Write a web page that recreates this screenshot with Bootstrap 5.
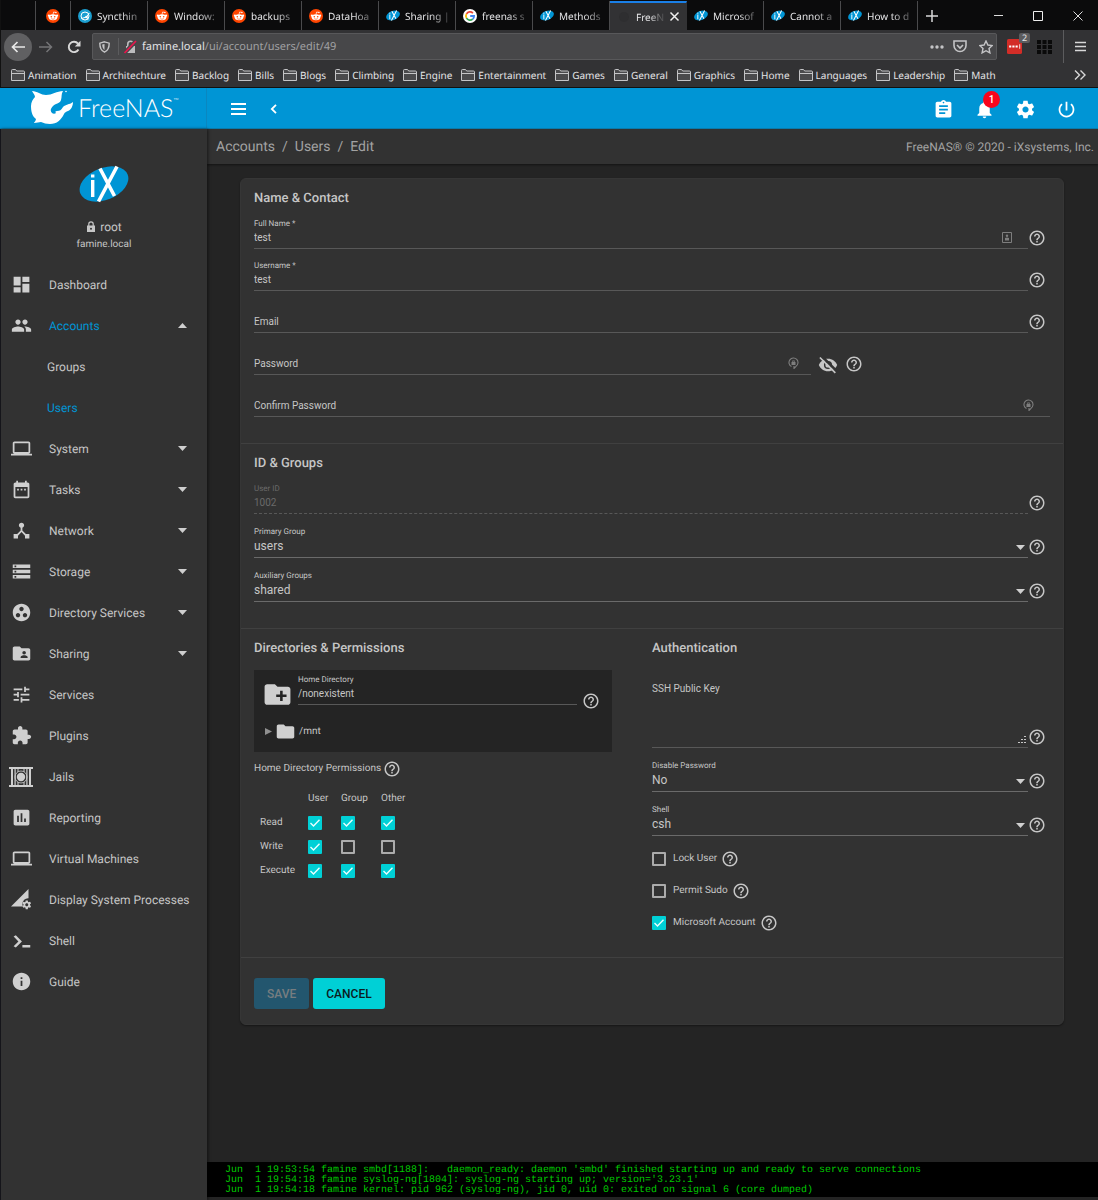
<!DOCTYPE html>
<html lang="en">
<head>
<meta charset="utf-8">
<meta name="viewport" content="width=device-width, initial-scale=1">
<title>FreeNAS - Edit User</title>
<link href="https://cdn.jsdelivr.net/npm/bootstrap@5.3.0/dist/css/bootstrap.min.css" rel="stylesheet">
<style>
:root{--panel:#323232;--ink:#c6c6c6;--blue:#0095d5;--cyan:#00d0d6}
body{font-family:Roboto,"Liberation Sans",sans-serif;font-size:12px;line-height:16px;background:#242424;color:var(--ink);text-rendering:geometricPrecision}
svg{display:block;flex:none}
svg:not([fill]){fill:currentColor}
a{color:inherit;text-decoration:none}
button{background:none;border:0;padding:0;color:inherit}
.chrome{font-family:"Noto Sans","Open Sans",sans-serif;font-size:10px;background:#323234;color:#e4e4e6;border-left:1px solid #111}
.tabstrip{background:#0b0b0c;height:30px;padding-top:1px}
.pinned,.btab{border-right:1px solid #4a4a4c}
.pinned{width:35px;display:flex;align-items:center;justify-content:center}
.btab{width:77px;padding-left:7px;gap:5px;color:#e4e4e6}
.btab .caption{flex:1;white-space:nowrap;-webkit-mask-image:linear-gradient(90deg,#000 50%,#0003 90%);mask-image:linear-gradient(90deg,#000 50%,#0003 90%)}
.btab.current{background:#323234;border-top:2px solid #1a80e8;border-right-color:#323234}
.btab.current svg.shut{margin-right:10px}
.winctl{width:40px;display:flex;align-items:center;justify-content:center}
.toolrow{height:33px;padding:0 12px 0 3px}
.navbtn{width:28px;height:28px;border-radius:50%;display:flex;align-items:center;justify-content:center}
.backbtn{background:#606062}
.urlbox{height:27px;background:#474749;border:1px solid #58585a;border-radius:2px;margin:0 10px 0 4px;padding:0 3px 0 6px;font-size:11px}
.urlbox .path{color:#a0a0a2}
.vline{width:1px;background:#5c5c5e}
.tooltail{gap:11px}
.bookrow{height:25px;padding:0 12px 0 10px;gap:9px;border-bottom:1px solid #111;white-space:nowrap}
.bookrow a{display:flex;align-items:center;gap:3px}
.extbadge{position:absolute;left:8px;top:-6px;background:#5c5c5e;font-size:9px;line-height:10px;padding:0 3px;border-radius:2px}
.topbar{background:var(--blue);height:41px;color:#fff;border-bottom:1px solid #0a7fb3}
.brand{width:207px;padding-left:31px;gap:4px;border-right:1px solid #0a87c0}
.brandname{font-family:Lato,sans-serif;font-weight:300;font-size:25px;line-height:30px}
.brandname sup{font-size:7px;top:-14px}
.topicons{gap:20px;padding-right:21px}
.topbar>button,.topicons{margin-top:2px}
.alertcount{position:absolute;left:9px;top:-8px;width:17px;height:17px;border-radius:50%;background:#f8041c;font-size:10px;font-weight:500;line-height:17px;text-align:center}
.sidebar{width:207px;background:var(--panel);border-left:1px solid #15151a;box-shadow:1px 0 3px #0008;z-index:1}
.profile{height:135px;padding-top:36px}
.profile .host{font-size:10px;margin-top:2px}
.menuitem{display:flex;align-items:center;height:41px;padding:0 20px 0 8px;gap:16px;white-space:nowrap}
.menuitem .glyph{width:24px;flex:none;display:flex;justify-content:center}
.menuitem.sub{padding-left:46px}
.menuitem.on{color:var(--blue)}
.menuitem .glyph{color:#cfcfcf}
.menuitem .arrow{margin-left:auto;color:#cfcfcf}
.crumbs{background:var(--panel);height:35px;padding:0 4px 0 9px;color:#a2a2a2;box-shadow:0 1px 2px #0007}
.crumbs ol{font-size:14px;--bs-breadcrumb-divider-color:#a2a2a2;--bs-breadcrumb-item-padding-x:7px}
.crumbs .breadcrumb-item.active{color:#a2a2a2}
.sheet{background:var(--panel);border:1px solid #363636;border-radius:6px;margin:14px 34px 0 33px;box-shadow:0 1px 2px #0006}
.block{padding:12px 13px 26px}
.block+.block{border-top:1px solid #404040}
.block h2{font-size:13px;line-height:16px;font-weight:500;margin:0}
.line{display:flex;align-items:flex-end;height:42px}
.line.tall{height:44px}
.fld{flex:1;position:relative;display:flex;flex-direction:column}
.fld label{font-size:8px;line-height:10px}
.fld input,.fld textarea{font-size:10px;line-height:16px;height:20px;padding:0 0 3px;border:0;border-bottom:1px solid #585858;background:none;color:inherit;width:100%;border-radius:0}
.fld textarea{height:75px;padding-top:8px;resize:none;display:block}
.fld ::placeholder{color:inherit;opacity:1}
.fld select{font-size:12px;line-height:18px;height:21px;padding:0 0 2px;border:0;border-bottom:1px solid #6a6a6a;border-radius:0;background-color:transparent;color:inherit;background-image:url("data:image/svg+xml,%3Csvg xmlns='http://www.w3.org/2000/svg' viewBox='0 0 9 5'%3E%3Cpath fill='%23cfcfcf' d='M0 0h9L4.500 5z'/%3E%3C/svg%3E");background-size:9px 5px;background-position:right 3px center}
.fld.off{color:#6a6a6a}
.fld.off input{border-bottom:1px dashed #585858}
.fld.part{flex:0 0 70%}
.inmark{position:absolute;right:16px;bottom:6px;color:#7e7e7e}
.fld.part .inmark{right:12px}
.grip{position:absolute;right:2px;bottom:4px}
.help{width:22px;margin-bottom:2px}
.aside-btn{margin-left:7px}
.dirbox{background:#242424;height:82px;width:90%;margin-top:13px;padding:5px 12px 0 8px}
.dirline{height:35px;gap:5px}
.treerow{font-size:10px;gap:3px;padding:11px 0 0 3px}
.permhead{font-size:10px;gap:2px}
.form-check-input[type=checkbox]{width:14px;height:14px;margin:0;float:none;border:2px solid #ababab;border-radius:1px;background-color:transparent;flex:none;display:block}
.form-check-input[type=checkbox]:checked{background-color:var(--cyan);border-color:var(--cyan);background-size:14px;background-image:url("data:image/svg+xml,%3Csvg xmlns='http://www.w3.org/2000/svg' viewBox='0 0 14 14'%3E%3Cpath fill='none' stroke='%23eaffff' stroke-width='1.4' d='M2.500 7l3 3 6-6.200'/%3E%3C/svg%3E");background-position:center}
.perms{font-size:10px;margin-left:6px}
.perms th{font-weight:400;height:24px;padding:1px 0 0}
.perms td{padding:2px 0 0}
.perms th:first-child{width:48px}
.perms th:nth-child(2){width:33px}
.perms th:nth-child(3){width:40px}
.cklist{padding-top:7px}
.ckrow{height:32px;gap:4px;font-size:10px}
.ckrow label{padding-left:3px}
.lower{padding-bottom:18px}
.actions{padding-top:20px;padding-bottom:15px}
.act{font-size:12px;font-weight:500;height:31px;padding:0 13px;border:0;border-radius:3px;background:var(--cyan);color:#0c1c1e}
.act:disabled{background:#23566e;color:#777d80;opacity:1}
.console{background:#000;color:#00c800;font-family:"Liberation Mono",monospace;font-size:10px;line-height:10px;padding:4px 18px 1px;margin:0 0 3px;overflow:hidden}
</style>
</head>
<body class="d-flex flex-column min-vh-100">
<svg width="0" height="0" class="position-absolute" aria-hidden="true">
<symbol id="help" viewBox="0 0 24 24"><path d="M11 18h2v-2h-2v2zm1-16C6.480 2 2 6.480 2 12s4.480 10 10 10 10-4.480 10-10S17.520 2 12 2zm0 18c-4.410 0-8-3.590-8-8s3.590-8 8-8 8 3.590 8 8-3.590 8-8 8zm0-14c-2.210 0-4 1.790-4 4h2c0-1.100.9-2 2-2s2 .9 2 2c0 2-3 1.750-3 5h2c0-2.250 3-2.500 3-5 0-2.210-1.790-4-4-4z"/></symbol>
<symbol id="reddit" viewBox="0 0 14 14"><circle cx="7" cy="7" r="7" fill="#ff4500"/><ellipse cx="7" cy="8.300" rx="4.300" ry="3" fill="#fff"/><circle cx="2.900" cy="6.700" r="1.100" fill="#fff"/><circle cx="11.100" cy="6.700" r="1.100" fill="#fff"/><path d="M7 5.500l.6-2.500 2 .4" fill="none" stroke="#fff" stroke-width=".7"/><circle cx="9.900" cy="3.500" r=".8" fill="#fff"/><circle cx="5.300" cy="7.800" r=".8" fill="#ff4500"/><circle cx="8.700" cy="7.800" r=".8" fill="#ff4500"/><path d="M5.200 9.700q1.800 1.100 3.600 0" fill="none" stroke="#ff4500" stroke-width=".6"/></symbol>
<symbol id="ix" viewBox="0 0 50 38"><ellipse cx="25" cy="19" rx="25.500" ry="16" transform="rotate(-22 25 19)" fill="#0095d5"/><path d="M12 15h3.400v17H12zM12 9.500h3.400v3H12z" fill="#fff"/><path d="M21 3.500L35.500 31M38 1.500L19.500 36.500" stroke="#fff" stroke-width="3.600" fill="none"/></symbol>
<symbol id="folder-o" viewBox="0 0 14 12"><path d="M.5 11.500V1.500q0-1 1-1h3l1.200 1.500h6.800q1 0 1 1v8.500zM.5 4.500h13" fill="#4a4a4c" stroke="#c4c4c6"/></symbol>
<symbol id="down" viewBox="0 0 9 5"><path d="M0 0h9L4.500 5z"/></symbol>
<symbol id="laptop" viewBox="0 0 24 24"><path d="M20 18c1.100 0 1.990-.9 1.990-2L22 6c0-1.100-.9-2-2-2H4c-1.100 0-2 .9-2 2v10c0 1.100.9 2 2 2H0v2h24v-2h-4zM4 6h16v10H4V6z"/></symbol>
<symbol id="gear" viewBox="0 0 24 24"><path d="M19.430 12.980c.04-.32.07-.64.07-.98s-.03-.66-.07-.98l2.110-1.650c.19-.15.24-.42.12-.64l-2-3.460c-.12-.22-.39-.3-.61-.22l-2.490 1c-.52-.4-1.080-.73-1.690-.98l-.38-2.650C14.460 2.180 14.250 2 14 2h-4c-.25 0-.46.18-.49.42l-.38 2.650c-.61.25-1.170.59-1.690.98l-2.490-1c-.23-.09-.49 0-.61.22l-2 3.460c-.13.22-.07.49.12.64l2.110 1.650c-.04.32-.07.65-.07.98s.03.66.07.98l-2.110 1.650c-.19.15-.24.42-.12.64l2 3.460c.12.22.39.3.61.22l2.490-1c.52.4 1.080.73 1.690.98l.38 2.650c.03.24.24.42.49.42h4c.25 0 .46-.18.49-.42l.38-2.650c.61-.25 1.170-.59 1.690-.98l2.490 1c.23.09.49 0 .61-.22l2-3.460c.12-.22.07-.49-.12-.64l-2.110-1.650zM12 15.500c-1.930 0-3.500-1.570-3.500-3.500s1.570-3.500 3.500-3.500 3.500 1.570 3.500 3.500-1.570 3.500-3.500 3.500z"/></symbol>
<symbol id="keymark" viewBox="0 0 11 12"><path d="M3.500 9.600A4.500 4.500 0 1 1 8 9.300L6 11.500V9" fill="none" stroke="currentColor" stroke-width="1.100"/><path d="M3.500 5h4v3h-4zM4.300 5V3.500h2.400V5h-.8v-.8h-.8V5z"/></symbol>
</svg>

<header class="chrome">
<div class="tabstrip d-flex">
<div class="pinned"></div>
<a href="#" class="pinned" aria-label="reddit"><svg width="14" height="14"><use href="#reddit"/></svg></a>
<a href="#" class="btab d-flex align-items-center"><svg width="14" height="14" viewBox="0 0 14 14"><circle cx="7" cy="7" r="7" fill="#1c9fd0"/><circle cx="7" cy="7" r="4" fill="none" stroke="#fff"/><path d="M3.500 9.500L8.500 8l2.800-4M8.500 8l1.500 2.500" stroke="#fff" fill="none"/><circle cx="8.500" cy="8" r="1.300" fill="#fff"/></svg><span class="caption">Syncthin</span></a>
<a href="#" class="btab d-flex align-items-center"><svg width="14" height="14"><use href="#reddit"/></svg><span class="caption">Window:</span></a>
<a href="#" class="btab d-flex align-items-center"><svg width="14" height="14"><use href="#reddit"/></svg><span class="caption">backups</span></a>
<a href="#" class="btab d-flex align-items-center"><svg width="14" height="14"><use href="#reddit"/></svg><span class="caption">DataHoa</span></a>
<a href="#" class="btab d-flex align-items-center"><svg width="14" height="11"><use href="#ix"/></svg><span class="caption">Sharing |</span></a>
<a href="#" class="btab d-flex align-items-center"><svg width="14" height="14" viewBox="0 0 14 14"><circle cx="7" cy="7" r="7" fill="#fff"/><g fill="none" stroke-width="1.800"><path d="M9.900 4.100A4.100 4.100 0 0 0 3.500 4.900" stroke="#ea4335"/><path d="M3.500 4.900a4.100 4.100 0 0 0 0 4.200" stroke="#fbbc05"/><path d="M3.500 9.100a4.100 4.100 0 0 0 6.200 1" stroke="#34a853"/><path d="M9.700 10.100A4 4 0 0 0 11.100 7H7.200" stroke="#4285f4"/></g></svg><span class="caption">freenas s</span></a>
<a href="#" class="btab d-flex align-items-center"><svg width="14" height="11"><use href="#ix"/></svg><span class="caption">Methods</span></a>
<a href="#" class="btab current d-flex align-items-center" aria-current="page"><svg width="14" height="14" viewBox="0 0 14 14"><circle cx="7" cy="7" r="5" fill="#2e2e30"/></svg><span class="caption">FreeN</span><svg class="shut" width="11" height="11" viewBox="0 0 11 11"><path d="M1.500 1.500l8 8M9.500 1.500l-8 8" stroke="#f0f0f0" stroke-width="1.500"/></svg></a>
<a href="#" class="btab d-flex align-items-center"><svg width="14" height="11"><use href="#ix"/></svg><span class="caption">Microsof</span></a>
<a href="#" class="btab d-flex align-items-center"><svg width="14" height="11"><use href="#ix"/></svg><span class="caption">Cannot a</span></a>
<a href="#" class="btab d-flex align-items-center"><svg width="14" height="11"><use href="#ix"/></svg><span class="caption">How to d</span></a>
<button type="button" class="px-2" aria-label="New tab"><svg width="12" height="12" viewBox="0 0 12 12"><path d="M6 0v12M0 6h12" stroke="#d8d8d8" stroke-width="1.500"/></svg></button>
<div class="d-flex ms-auto">
<button type="button" class="winctl" aria-label="Minimize"><svg width="9" height="9" viewBox="0 0 9 9"><path d="M0 4.500h9" stroke="#ddd"/></svg></button>
<button type="button" class="winctl" aria-label="Maximize"><svg width="10" height="10" viewBox="0 0 10 10"><path d="M.5.5h9v9h-9z" stroke="#eee" fill="none"/></svg></button>
<button type="button" class="winctl" aria-label="Close"><svg width="10" height="10" viewBox="0 0 10 10"><path d="M.5.5l9 9M9.500.5l-9 9" stroke="#ddd"/></svg></button>
</div>
</div>
<div class="toolrow d-flex align-items-center">
<button type="button" class="navbtn backbtn" aria-label="Back"><svg width="14" height="12" viewBox="0 0 14 12"><path d="M14 6H1.500M6.500 1l-5 5 5 5" fill="none" stroke="#e8e8e8" stroke-width="1.700"/></svg></button>
<button type="button" class="navbtn" aria-label="Forward"><svg width="14" height="12" viewBox="0 0 14 12"><path d="M0 6h12.500M7.500 1l5 5-5 5" fill="none" stroke="#747476" stroke-width="1.500"/></svg></button>
<button type="button" class="navbtn" aria-label="Reload"><svg width="14" height="14" viewBox="0 0 14 14"><path d="M11.500 9.500A5.200 5.200 0 1 1 11 3.600" fill="none" stroke="#d8d8d8" stroke-width="1.900"/><path d="M13.500.8v5.700H7.800z" fill="#d8d8d8"/></svg></button>
<div class="urlbox d-flex align-items-center flex-fill">
<svg width="11" height="12" viewBox="0 0 11 12"><path d="M5.500.8l4.700 1.400c0 4.500-1 7.300-4.700 9C1.800 9.500.8 6.700.8 2.200z" fill="none" stroke="#c4c4c6" stroke-width="1.400"/><path d="M5.500 3v6C4 8 3.200 6 3.200 3.600z" fill="#c4c4c6"/></svg>
<span class="vline ms-2 me-1 my-1 align-self-stretch"></span>
<svg class="me-1" width="15" height="14" viewBox="0 0 15 14"><path d="M3 6h9v7H3z" fill="#bcbcbe"/><path d="M4.800 6V4a2.700 2.700 0 0 1 5.400 0v2" fill="none" stroke="#bcbcbe" stroke-width="1.600"/><path d="M1.500 13L13 1" stroke="#474749" stroke-width="4"/><path d="M1.500 13L13 1" stroke="#e8164c" stroke-width="1.800"/></svg>
<span>famine.local<span class="path">/ui/account/users/edit/49</span></span>
<div class="d-flex align-items-center gap-2 ms-auto">
<svg width="17" height="14" viewBox="0 0 17 14" fill="#c4c4c6"><circle cx="4" cy="7" r="1.700"/><circle cx="9" cy="7" r="1.700"/><circle cx="14" cy="7" r="1.700"/></svg>
<svg width="14" height="13" viewBox="0 0 14 13"><path d="M1 1h12v4.500a6 6 0 0 1-12 0zM4 5l3 3 3-3" fill="none" stroke="#c4c4c6" stroke-width="1.600"/></svg>
<svg class="ms-1" width="14" height="14" viewBox="0 0 14 14"><path d="M7 1l1.900 4 4.300.5-3.200 3 .9 4.400L7 10.700l-3.900 2.200.9-4.400-3.200-3L5.100 5z" fill="none" stroke="#c4c4c6" stroke-width="1.400"/></svg>
</div>
</div>
<div class="tooltail d-flex align-items-center align-self-stretch">
<div class="position-relative me-1"><svg width="15" height="15" viewBox="0 0 14 14"><rect width="14" height="14" rx="1.500" fill="#d32d27"/><path d="M2 6h2v2H2zM5 6h2v2H5zM8 6h2v2H8zM11.500 5h.8v4h-.8z" fill="#fff"/></svg><span class="extbadge ms-1">2</span></div>
<svg width="15" height="14" viewBox="0 0 15 14" fill="#0a0a0a"><path d="M0 0h4v4H0zM5.500 0h4v4h-4zM11 0h4v4h-4zM0 5h4v4H0zM5.500 5h4v4h-4zM11 5h4v4h-4zM0 10h4v4H0zM5.500 10h4v4h-4zM11 10h4v4h-4z"/></svg>
<span class="vline align-self-stretch"></span>
<button type="button" aria-label="Menu"><svg width="11" height="11" viewBox="0 0 11 11"><path d="M0 1.500h11M0 5.500h11M0 9.500h11" stroke="#d8d8d8" stroke-width="1.500"/></svg></button>
</div>
</div>
<nav class="bookrow d-flex align-items-center" aria-label="Bookmarks">
<a href="#"><svg width="14" height="12"><use href="#folder-o"/></svg>Animation</a>
<a href="#"><svg width="14" height="12"><use href="#folder-o"/></svg>Architechture</a>
<a href="#"><svg width="14" height="12"><use href="#folder-o"/></svg>Backlog</a>
<a href="#"><svg width="14" height="12"><use href="#folder-o"/></svg>Bills</a>
<a href="#"><svg width="14" height="12"><use href="#folder-o"/></svg>Blogs</a>
<a href="#"><svg width="14" height="12"><use href="#folder-o"/></svg>Climbing</a>
<a href="#"><svg width="14" height="12"><use href="#folder-o"/></svg>Engine</a>
<a href="#"><svg width="14" height="12"><use href="#folder-o"/></svg>Entertainment</a>
<a href="#"><svg width="14" height="12"><use href="#folder-o"/></svg>Games</a>
<a href="#"><svg width="14" height="12"><use href="#folder-o"/></svg>General</a>
<a href="#"><svg width="14" height="12"><use href="#folder-o"/></svg>Graphics</a>
<a href="#"><svg width="14" height="12"><use href="#folder-o"/></svg>Home</a>
<a href="#"><svg width="14" height="12"><use href="#folder-o"/></svg>Languages</a>
<a href="#"><svg width="14" height="12"><use href="#folder-o"/></svg>Leadership</a>
<a href="#"><svg width="14" height="12"><use href="#folder-o"/></svg>Math</a>
<button type="button" class="ms-auto" aria-label="More bookmarks"><svg width="12" height="10" viewBox="0 0 12 10"><path d="M1 .5L5.500 5 1 9.500M6.500.5L11 5 6.500 9.500" fill="none" stroke="#d8d8d8" stroke-width="1.400"/></svg></button>
</nav>
</header>

<div class="topbar d-flex align-items-center">
<a href="#" class="brand d-flex align-items-center align-self-stretch"><svg width="43" height="36" viewBox="0 0 43 36"><path d="M1 1c5 0 9 4 14 4 6 0 11-4 17-4-2 3-1 6-2 9-1 3-3 3-5 4-4 2-7 6-4 9 1 1 3 1 4 0-1-1-1-2 1-2 3 0 4-1 6-4 3-3 6-2 10-5 0 4-2 8-5 9-2 1-3 1-4 3-3 6-7 10-14 10-4 0-6-1-9-2-2 0-4 1-7 1 0-1 2-2 2-4C1 26 0 21 0 16c0-4 2-7 4-9 0-2-2-4-3-6z" fill="#fff"/><circle cx="35" cy="1.500" r=".8" fill="#fff"/></svg><span class="brandname">FreeNAS<sup>™</sup></span></a>
<button type="button" class="ms-4" aria-label="Toggle menu"><svg width="15" height="12" viewBox="0 0 15 12"><path d="M0 1h15M0 6h15M0 11h15" stroke="#fff" stroke-width="1.800"/></svg></button>
<button type="button" class="ms-4" aria-label="Collapse"><svg width="7" height="10" viewBox="0 0 7 10"><path d="M6 .8L1.800 5 6 9.200" fill="none" stroke="#fff" stroke-width="1.800"/></svg></button>
<div class="topicons d-flex ms-auto">
<button type="button" aria-label="Tasks"><svg width="21" height="21" viewBox="0 0 24 24"><path d="M19 3h-4.180C14.400 1.840 13.300 1 12 1c-1.300 0-2.400.84-2.820 2H5c-1.100 0-2 .9-2 2v14c0 1.100.9 2 2 2h14c1.100 0 2-.9 2-2V5c0-1.100-.9-2-2-2zm-7 0c.55 0 1 .45 1 1s-.45 1-1 1-1-.45-1-1 .45-1 1-1zm2 14H7v-2h7v2zm3-4H7v-2h10v2zm0-4H7V7h10v2z"/></svg></button>
<button type="button" class="position-relative" aria-label="Alerts"><svg width="21" height="21" viewBox="0 0 24 24"><path d="M12 22c1.100 0 2-.9 2-2h-4c0 1.100.89 2 2 2zm6-6v-5c0-3.070-1.640-5.640-4.500-6.320V4c0-.83-.67-1.500-1.500-1.500s-1.500.67-1.500 1.500v.68C7.630 5.360 6 7.920 6 11v5l-2 2v1h16v-1l-2-2z"/></svg><span class="alertcount">1</span></button>
<button type="button" aria-label="Settings"><svg width="21" height="21"><use href="#gear"/></svg></button>
<button type="button" aria-label="Power"><svg width="21" height="21" viewBox="0 0 24 24"><path d="M13 3h-2v10h2V3zm4.830 2.170l-1.420 1.420C17.990 7.860 19 9.810 19 12c0 3.870-3.130 7-7 7s-7-3.130-7-7c0-2.190 1.010-4.140 2.580-5.420L6.170 5.170C4.230 6.820 3 9.260 3 12c0 4.970 4.030 9 9 9s9-4.030 9-9c0-2.740-1.230-5.180-3.170-6.830z"/></svg></button>
</div>
</div>

<div class="d-flex flex-fill">
<aside class="sidebar flex-shrink-0">
<div class="profile d-flex flex-column align-items-center">
<svg width="50" height="38"><use href="#ix"/></svg>
<div class="d-flex align-items-center gap-1 mt-3"><svg width="10" height="12" viewBox="0 0 10 12"><path d="M1 4.500h8v6.500H1z"/><path d="M2.800 5V3a2.200 2.200 0 0 1 4.400 0v2" fill="none" stroke="currentColor" stroke-width="1.200"/><circle cx="5" cy="7.700" r="1" fill="#323232"/></svg><span>root</span></div>
<div class="host">famine.local</div>
</div>
<nav aria-label="Main">
<a href="#" class="menuitem"><span class="glyph"><svg width="21" height="21" viewBox="0 0 24 24"><path d="M3 13h8V3H3v10zm0 8h8v-6H3v6zm10 0h8V11h-8v10zm0-18v6h8V3h-8z"/></svg></span><span>Dashboard</span></a>
<a href="#" class="menuitem on"><span class="glyph"><svg width="21" height="21" viewBox="0 0 24 24"><path d="M16 11c1.660 0 2.990-1.340 2.990-3S17.660 5 16 5s-3 1.340-3 3 1.340 3 3 3zm-8 0c1.660 0 2.990-1.340 2.990-3S9.660 5 8 5 5 6.340 5 8s1.340 3 3 3zm0 2c-2.330 0-7 1.170-7 3.500V19h14v-2.500C15 14.170 10.330 13 8 13zm8 0c-.29 0-.62.02-.97.05 1.160.84 1.970 1.970 1.970 3.450V19h6v-2.500c0-2.330-4.670-3.500-7-3.500z"/></svg></span><span>Accounts</span><svg class="arrow" width="9" height="5" viewBox="0 0 9 5"><path d="M0 5h9L4.500 0z"/></svg></a>
<a href="#" class="menuitem sub"><span>Groups</span></a>
<a href="#" class="menuitem sub on"><span>Users</span></a>
<a href="#" class="menuitem"><span class="glyph"><svg width="21" height="21"><use href="#laptop"/></svg></span><span>System</span><svg class="arrow" width="9" height="5"><use href="#down"/></svg></a>
<a href="#" class="menuitem"><span class="glyph"><svg width="21" height="21" viewBox="0 0 24 24"><path d="M9 11H7v2h2v-2zm4 0h-2v2h2v-2zm4 0h-2v2h2v-2zm2-7h-1V2h-2v2H8V2H6v2H5c-1.110 0-1.990.9-1.990 2L3 20c0 1.100.89 2 2 2h14c1.100 0 2-.9 2-2V6c0-1.100-.9-2-2-2zm0 16H5V9h14v11z"/></svg></span><span>Tasks</span><svg class="arrow" width="9" height="5"><use href="#down"/></svg></a>
<a href="#" class="menuitem"><span class="glyph"><svg width="21" height="21" viewBox="0 0 24 24"><path d="M17 16l-4-4V8.820C14.160 8.400 15 7.300 15 6c0-1.660-1.340-3-3-3S9 4.340 9 6c0 1.300.84 2.400 2 2.820V12l-4 4H3v5h5v-3.050l4-4.200 4 4.200V21h5v-5h-4z"/></svg></span><span>Network</span><svg class="arrow" width="9" height="5"><use href="#down"/></svg></a>
<a href="#" class="menuitem"><span class="glyph"><svg width="21" height="21" viewBox="0 0 24 24"><path d="M2 20h20v-4H2v4zm2-3h2v2H4v-2zM2 4v4h20V4H2zm4 3H4V5h2v2zm-4 7h20v-4H2v4zm2-3h2v2H4v-2z"/></svg></span><span>Storage</span><svg class="arrow" width="9" height="5"><use href="#down"/></svg></a>
<a href="#" class="menuitem"><span class="glyph"><svg width="21" height="21" viewBox="0 0 24 24"><path d="M12 2C6.480 2 2 6.480 2 12s4.480 10 10 10 10-4.480 10-10S17.520 2 12 2zM8 17.500c-1.380 0-2.500-1.120-2.500-2.500s1.120-2.500 2.500-2.500 2.500 1.120 2.500 2.500-1.120 2.500-2.500 2.500zM9.500 8c0-1.380 1.120-2.500 2.500-2.500s2.500 1.120 2.500 2.500-1.120 2.500-2.500 2.500S9.500 9.380 9.500 8zm6.500 9.500c-1.380 0-2.500-1.120-2.500-2.500s1.120-2.500 2.500-2.500 2.500 1.120 2.500 2.500-1.120 2.500-2.500 2.500z"/></svg></span><span>Directory Services</span><svg class="arrow" width="9" height="5"><use href="#down"/></svg></a>
<a href="#" class="menuitem"><span class="glyph"><svg width="21" height="21" viewBox="0 0 24 24"><path d="M20 6h-8l-2-2H4c-1.100 0-1.990.9-1.990 2L2 18c0 1.100.9 2 2 2h16c1.100 0 2-.9 2-2V8c0-1.100-.9-2-2-2zm-5 3c1.100 0 2 .9 2 2s-.9 2-2 2-2-.9-2-2 .9-2 2-2zm4 8h-8v-1c0-1.330 2.670-2 4-2s4 .67 4 2v1z"/></svg></span><span>Sharing</span><svg class="arrow" width="9" height="5"><use href="#down"/></svg></a>
<a href="#" class="menuitem"><span class="glyph"><svg width="21" height="21" viewBox="0 0 24 24"><path d="M3 17v2h6v-2H3zM3 5v2h10V5H3zm10 16v-2h8v-2h-8v-2h-2v6h2zM7 9v2H3v2h4v2h2V9H7zm14 4v-2H11v2h10zm-6-4h2V7h4V5h-4V3h-2v6z"/></svg></span><span>Services</span></a>
<a href="#" class="menuitem"><span class="glyph"><svg width="21" height="21" viewBox="0 0 24 24"><path d="M20.500 11H19V7c0-1.100-.9-2-2-2h-4V3.500C13 2.120 11.880 1 10.500 1S8 2.120 8 3.500V5H4c-1.100 0-1.990.9-1.990 2v3.800H3.500c1.490 0 2.700 1.210 2.700 2.700s-1.210 2.700-2.700 2.700H2V20c0 1.100.9 2 2 2h3.800v-1.500c0-1.490 1.210-2.700 2.700-2.700 1.490 0 2.700 1.210 2.700 2.700V22H17c1.100 0 2-.9 2-2v-4h1.500c1.380 0 2.500-1.120 2.500-2.500S21.880 11 20.500 11z"/></svg></span><span>Plugins</span></a>
<a href="#" class="menuitem"><span class="glyph"><svg width="24" height="20" viewBox="0 0 24 20"><path d="M0 0h24v2H0zM0 18h24v2H0zM2 2h2v16H2zM5.500 2h1.200v16H5.500zM17.300 2h1.200v16h-1.200zM20 2h2v16h-2zM8.500 2h1v3h-1zM14.500 2h1v3h-1zM8.500 15h1v3h-1zM14.500 15h1v3h-1z"/><circle cx="12" cy="10" r="4.200"/><circle cx="12" cy="10" r="6" fill="none" stroke="currentColor" stroke-width=".8"/></svg></span><span>Jails</span></a>
<a href="#" class="menuitem"><span class="glyph"><svg width="21" height="21" viewBox="0 0 24 24"><path d="M19 3H5c-1.100 0-2 .9-2 2v14c0 1.100.9 2 2 2h14c1.100 0 2-.9 2-2V5c0-1.100-.9-2-2-2zM9 17H7v-7h2v7zm4 0h-2V7h2v10zm4 0h-2v-4h2v4z"/></svg></span><span>Reporting</span></a>
<a href="#" class="menuitem"><span class="glyph"><svg width="21" height="21"><use href="#laptop"/></svg></span><span>Virtual Machines</span></a>
<a href="#" class="menuitem"><span class="glyph"><svg width="21" height="21" viewBox="0 0 24 24"><path d="M0 20L20 0v10.500a6.500 6.500 0 0 0-7 6.500q0 1.600.6 3z"/><svg x="12" y="12" width="12" height="12"><use href="#gear"/></svg></svg></span><span>Display System Processes</span></a>
<a href="#" class="menuitem"><span class="glyph"><svg width="21" height="21" viewBox="0 0 24 24"><path d="M3 7.500L5.500 6l7 7-7 7L3 18.500 8.500 13zM13 17h9v3h-9z"/></svg></span><span>Shell</span></a>
<a href="#" class="menuitem"><span class="glyph"><svg width="21" height="21" viewBox="0 0 24 24"><path d="M12 2C6.480 2 2 6.480 2 12s4.480 10 10 10 10-4.480 10-10S17.520 2 12 2zm1 15h-2v-6h2v6zm0-8h-2V7h2v2z"/></svg></span><span>Guide</span></a>
</nav>
</aside>

<div class="d-flex flex-column flex-fill">
<div class="crumbs d-flex align-items-center justify-content-between">
<nav aria-label="breadcrumb"><ol class="breadcrumb mb-0"><li class="breadcrumb-item"><a href="#">Accounts</a></li><li class="breadcrumb-item"><a href="#">Users</a></li><li class="breadcrumb-item active" aria-current="page">Edit</li></ol></nav>
<span>FreeNAS® © 2020 - iXsystems, Inc.</span>
</div>

<main>
<form class="sheet">
<section class="block">
<h2>Name &amp; Contact</h2>
<div class="line"><div class="fld"><label for="fn">Full Name *</label><input id="fn" value="test"><svg class="inmark" width="10" height="11" viewBox="0 0 10 11"><path d="M.5.5h9v10h-9z" fill="none" stroke="currentColor"/><circle cx="5" cy="3.800" r="1.200"/><path d="M3 8.500V6q2-1 4 0v2.500z"/></svg></div><button type="button" class="help" aria-label="Help"><svg width="18" height="18"><use href="#help"/></svg></button></div>
<div class="line"><div class="fld"><label for="un">Username *</label><input id="un" value="test"></div><button type="button" class="help" aria-label="Help"><svg width="18" height="18"><use href="#help"/></svg></button></div>
<div class="line"><div class="fld"><input aria-label="Email" placeholder="Email"></div><button type="button" class="help" aria-label="Help"><svg width="18" height="18"><use href="#help"/></svg></button></div>
<div class="line"><div class="fld part"><input aria-label="Password" type="password" placeholder="Password"><svg class="inmark" width="11" height="12"><use href="#keymark"/></svg></div><button type="button" class="aside-btn" aria-label="Show password"><svg width="20" height="20" viewBox="0 0 24 24"><path d="M12 4.500C7 4.500 2.700 7.600 1 12c1.700 4.400 6 7.500 11 7.500s9.300-3.100 11-7.500C21.300 7.600 17 4.500 12 4.500z"/><circle cx="12" cy="12" r="4" fill="none" stroke="#323232" stroke-width="1.800"/><path d="M4.500 1.500l18 18" stroke="#323232" stroke-width="3"/><path d="M2.300 3l18.500 18.500" stroke="currentColor" stroke-width="2"/></svg></button><button type="button" class="help aside-btn" aria-label="Help"><svg width="18" height="18"><use href="#help"/></svg></button></div>
<div class="line"><div class="fld"><input aria-label="Confirm Password" type="password" placeholder="Confirm Password"><svg class="inmark" width="11" height="12"><use href="#keymark"/></svg></div></div>
</section>

<section class="block">
<h2>ID &amp; Groups</h2>
<div class="line"><div class="fld off"><label for="uid">User ID</label><input id="uid" value="1002" disabled></div><button type="button" class="help" aria-label="Help"><svg width="18" height="18"><use href="#help"/></svg></button></div>
<div class="line tall"><div class="fld"><label for="pg">Primary Group</label><select id="pg" class="form-select"><option>users</option></select></div><button type="button" class="help" aria-label="Help"><svg width="18" height="18"><use href="#help"/></svg></button></div>
<div class="line tall"><div class="fld"><label for="ag">Auxiliary Groups</label><select id="ag" class="form-select"><option>shared</option></select></div><button type="button" class="help" aria-label="Help"><svg width="18" height="18"><use href="#help"/></svg></button></div>
</section>

<section class="block lower">
<div class="row g-0">
<div class="col-6">
<h2>Directories &amp; Permissions</h2>
<div class="dirbox">
<div class="dirline d-flex align-items-end">
<svg width="31" height="31" viewBox="0 0 24 24" fill="#cfcfcf"><path d="M20 6h-8l-2-2H4c-1.110 0-1.990.89-1.990 2L2 18c0 1.110.89 2 2 2h16c1.110 0 2-.89 2-2V8c0-1.110-.89-2-2-2zm-1 8h-3v3h-2v-3h-3v-2h3V9h2v3h3v2z"/></svg>
<div class="fld align-self-start"><label for="hd">Home Directory</label><input id="hd" value="/nonexistent"></div>
<button type="button" aria-label="Help"><svg width="18" height="18"><use href="#help"/></svg></button>
</div>
<div class="treerow d-flex align-items-center"><svg width="7" height="7" viewBox="0 0 7 7" fill="#909090"><path d="M0 0l7 3.500L0 7z"/></svg><svg width="21" height="21" viewBox="0 0 24 24" fill="#cfcfcf"><path d="M10 4H4c-1.100 0-1.990.9-1.990 2L2 18c0 1.100.9 2 2 2h16c1.100 0 2-.9 2-2V8c0-1.100-.9-2-2-2h-8l-2-2z"/></svg><span>/mnt</span></div>
</div>
<div class="permhead d-flex align-items-center mt-2">Home Directory Permissions<svg width="18" height="18"><use href="#help"/></svg></div>
<table class="perms mt-2">
<thead><tr><th></th><th scope="col">User</th><th scope="col">Group</th><th scope="col">Other</th></tr></thead>
<tbody>
<tr><th scope="row">Read</th><td><input class="form-check-input" type="checkbox" aria-label="User read" checked></td><td><input class="form-check-input" type="checkbox" aria-label="Group read" checked></td><td><input class="form-check-input" type="checkbox" aria-label="Other read" checked></td></tr>
<tr><th scope="row">Write</th><td><input class="form-check-input" type="checkbox" aria-label="User write" checked></td><td><input class="form-check-input" type="checkbox" aria-label="Group write"></td><td><input class="form-check-input" type="checkbox" aria-label="Other write"></td></tr>
<tr><th scope="row">Execute</th><td><input class="form-check-input" type="checkbox" aria-label="User execute" checked></td><td><input class="form-check-input" type="checkbox" aria-label="Group execute" checked></td><td><input class="form-check-input" type="checkbox" aria-label="Other execute" checked></td></tr>
</tbody></table>
</div>
<div class="col-6">
<h2>Authentication</h2>
<div class="line h-auto pt-3"><div class="fld"><textarea aria-label="SSH Public Key" placeholder="SSH Public Key"></textarea><svg class="grip" width="8" height="8" viewBox="0 0 8 8"><path d="M6 0h2v1H6zM6 3h2v1H6zM3 3h2v1H3zM6 6h2v1H6zM3 6h2v1H3zM0 6h2v1H0z"/></svg></div><button type="button" class="help" aria-label="Help"><svg width="18" height="18"><use href="#help"/></svg></button></div>
<div class="line tall"><div class="fld"><label for="dp">Disable Password</label><select id="dp" class="form-select"><option>No</option></select></div><button type="button" class="help" aria-label="Help"><svg width="18" height="18"><use href="#help"/></svg></button></div>
<div class="line tall"><div class="fld"><label for="sh">Shell</label><select id="sh" class="form-select"><option>csh</option></select></div><button type="button" class="help" aria-label="Help"><svg width="18" height="18"><use href="#help"/></svg></button></div>
<div class="cklist">
<div class="ckrow d-flex align-items-center"><input class="form-check-input" type="checkbox" id="lu"><label for="lu">Lock User</label><svg width="18" height="18"><use href="#help"/></svg></div>
<div class="ckrow d-flex align-items-center"><input class="form-check-input" type="checkbox" id="ps"><label for="ps">Permit Sudo</label><svg width="18" height="18"><use href="#help"/></svg></div>
<div class="ckrow d-flex align-items-center"><input class="form-check-input" type="checkbox" id="ms" checked><label for="ms">Microsoft Account</label><svg width="18" height="18"><use href="#help"/></svg></div>
</div>
</div>
</div>
</section>

<section class="block actions d-flex gap-1"><button type="submit" class="btn act" disabled>SAVE</button><button type="button" class="btn act">CANCEL</button></section>
</form>
</main>

<pre class="console mt-auto">Jun  1 19:53:54 famine smbd[1188]:   daemon_ready: daemon 'smbd' finished starting up and ready to serve connections
Jun  1 19:54:18 famine syslog-ng[1804]: syslog-ng starting up; version='3.23.1'
Jun  1 19:54:18 famine kernel: pid 962 (syslog-ng), jid 0, uid 0: exited on signal 6 (core dumped)</pre>
</div>
</div>
<script src="https://cdn.jsdelivr.net/npm/bootstrap@5.3.0/dist/js/bootstrap.bundle.min.js"></script>
</body>
</html>
